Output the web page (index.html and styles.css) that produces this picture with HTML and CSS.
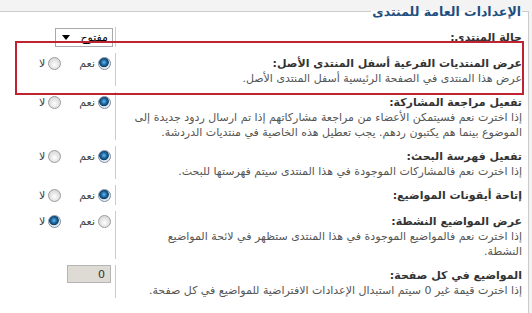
FILE: index.html
```html
<!DOCTYPE html>
<html lang="ar" dir="rtl">
<head>
    <meta charset="UTF-8" />
    <meta name="viewport" content="width=device-width, initial-scale=1" />
    <title>الإعدادات العامة للمنتدى</title>
    <link rel="stylesheet" href="styles.css">
</head>
<body>
    <fieldset class="settings">
        <legend>الإعدادات العامة للمنتدى</legend>

        <dl class="row">
            <dt><label for="forum_status">حالة المنتدى:</label></dt>
            <dd>
                <span class="select" id="forum_status">مفتوح<span class="arrow"></span></span>
            </dd>
        </dl>

        <dl class="row">
            <dt>
                <label>عرض المنتديات الفرعية أسفل المنتدى الأصل:</label>
                <span class="explain">عرض هذا المنتدى في الصفحة الرئيسية أسفل المنتدى الأصل.</span>
            </dt>
            <dd>
                <label class="opt"><input type="radio" name="display_on_index" checked /> نعم</label>
                <label class="opt"><input type="radio" name="display_on_index" /> لا</label>
            </dd>
        </dl>

        <dl class="row">
            <dt>
                <label>تفعيل مراجعة المشاركة:</label>
                <span class="explain">إذا اخترت نعم فسيتمكن الأعضاء من مراجعة مشاركاتهم إذا تم ارسال ردود جديدة إلى<br />الموضوع بينما هم يكتبون ردهم. يجب تعطيل هذه الخاصية في منتديات الدردشة.</span>
            </dt>
            <dd>
                <label class="opt"><input type="radio" name="enable_post_review" checked /> نعم</label>
                <label class="opt"><input type="radio" name="enable_post_review" /> لا</label>
            </dd>
        </dl>

        <dl class="row">
            <dt>
                <label>تفعيل فهرسة البحث:</label>
                <span class="explain">إذا اخترت نعم فالمشاركات الموجودة في هذا المنتدى سيتم فهرستها للبحث.</span>
            </dt>
            <dd>
                <label class="opt"><input type="radio" name="enable_indexing" checked /> نعم</label>
                <label class="opt"><input type="radio" name="enable_indexing" /> لا</label>
            </dd>
        </dl>

        <dl class="row">
            <dt>
                <label>إتاحة أيقونات المواضيع:</label>
            </dt>
            <dd>
                <label class="opt"><input type="radio" name="enable_icons" checked /> نعم</label>
                <label class="opt"><input type="radio" name="enable_icons" /> لا</label>
            </dd>
        </dl>

        <dl class="row">
            <dt>
                <label>عرض المواضيع النشطة:</label>
                <span class="explain">إذا اخترت نعم فالمواضيع الموجودة في هذا المنتدى ستظهر في لائحة المواضيع<br />النشطة.</span>
            </dt>
            <dd>
                <label class="opt"><input type="radio" name="display_active" /> نعم</label>
                <label class="opt"><input type="radio" name="display_active" checked /> لا</label>
            </dd>
        </dl>

        <dl class="row">
            <dt>
                <label for="topics_per_page">المواضيع في كل صفحة:</label>
                <span class="explain">إذا اخترت قيمة غير 0 سيتم استبدال الإعدادات الافتراضية للمواضيع في كل صفحة.</span>
            </dt>
            <dd>
                <input type="text" class="num" id="topics_per_page" value="0" />
            </dd>
        </dl>
    </fieldset>

    <div class="highlight"></div>
</body>
</html>
```

FILE: styles.css
```css
body {
    margin: 0;
    background-color: #f3f3f3;
    font-family: "DejaVu Sans", sans-serif;
    font-size: 11px;
    color: #333;
    position: relative;
    height: 313px;
    overflow: hidden;
}
.settings {
    margin: 3px 3px 0 0;
    padding: 7px 6px 20px 0;
    border: 1px solid #cccccc;
    border-left: none;
    background-color: #ffffff;
    min-width: 0;
}
.settings legend {
    padding: 0 1px;
    font-size: 12.5px;
    line-height: 17px;
    font-weight: bold;
    color: #1f4e7e; /* dark blue */
}
.row {
    display: flex;
    margin: 0 0 6px 0;
}
.row dt {
    flex: 1;
    padding-top: 3px;
    line-height: 15px;
}
.row dt label {
    display: block;
    font-weight: bold;
    color: #333;
}
.explain {
    display: block;
    color: #555;
}
.row dd {
    width: 116px;
    box-sizing: border-box;
    margin: 0;
    padding: 0 4px 0 0;
    border-right: 1px solid #cccccc;
    display: flex;
    align-items: flex-start;
    gap: 18px;
}
.opt {
    display: flex;
    align-items: center;
    gap: 3px;
    height: 20px;
    color: #444;
}
.opt input {
    appearance: none;
    -webkit-appearance: none;
    width: 13px;
    height: 13px;
    margin: 0;
    border-radius: 50%;
    border: 1px solid #9c9c9c;
    background: radial-gradient(circle at 50% 60%, #ffffff 0, #e6e6e6 45%, #cfcfcf 100%);
    box-sizing: border-box;
}
.opt input:checked {
    border-color: #7d8ea0;
    background: radial-gradient(circle at 45% 40%, #6fb6e6 0, #1a6aa5 30%, #0c3e68 50%, #dfe6ec 58%, #f5f7f9 100%);
}
.select {
    display: flex;
    align-items: center;
    justify-content: space-between;
    width: 58px;
    height: 19px;
    box-sizing: border-box;
    margin-top: 1px;
    margin-right: -2px;
    padding: 0 4px 0 6px;
    border: 1px solid #a9a9a9;
    background-color: #fff;
    color: #000;
}
.arrow {
    width: 0;
    height: 0;
    border-left: 4px solid transparent;
    border-right: 4px solid transparent;
    border-top: 5px solid #000;
}
.num {
    width: 44px;
    height: 18px;
    box-sizing: border-box;
    margin: 0;
    padding: 0 5px;
    border: 1px solid #b5b5b5;
    background-color: #dedbd4;
    font-family: "DejaVu Sans", sans-serif;
    font-size: 11px;
    color: #333;
    text-align: right;
}
.highlight {
    position: absolute;
    left: 15px;
    top: 41px;
    width: 509px;
    height: 54px;
    box-sizing: border-box;
    border: 2px solid #c0222f; /* annotation box */
    pointer-events: none;
}
```
